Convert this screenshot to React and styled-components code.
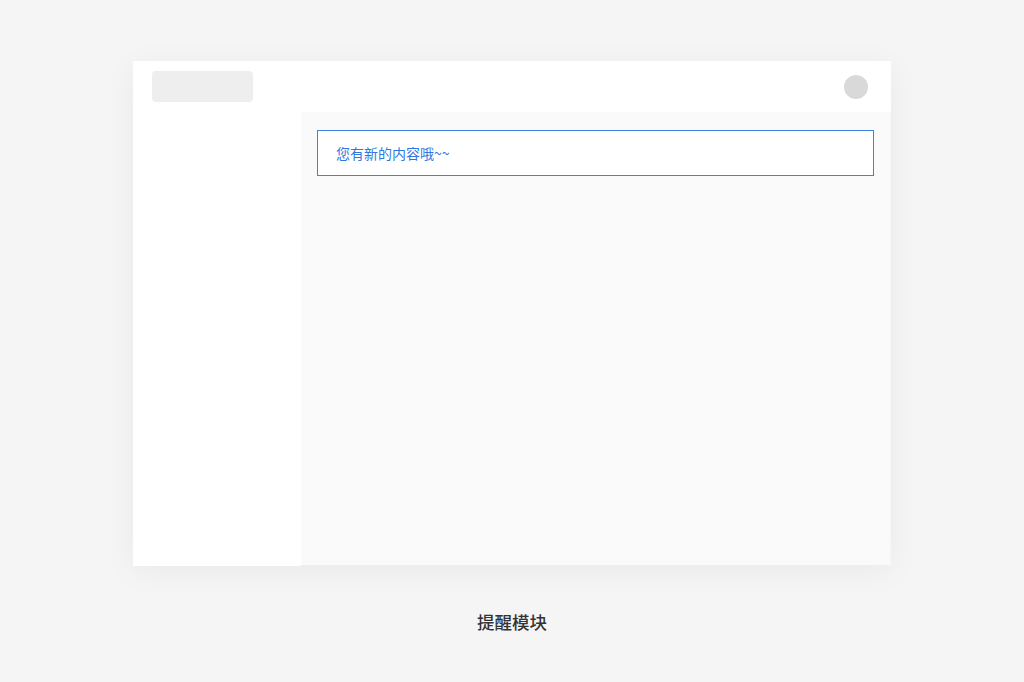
import React from "react";
import styled, { createGlobalStyle } from "styled-components";

const Global = createGlobalStyle`
  html, body { margin: 0; padding: 0; background: #f5f5f5; }
  body { font-family: "Noto Sans CJK SC", "Noto Sans", sans-serif; }
`;

const Page = styled.div`
  width: 1024px;
  height: 682px;
  background: #f5f5f5;
  display: flex;
  flex-direction: column;
  align-items: center;
  padding-top: 61px;
  box-sizing: border-box;
`;

const Frame = styled.div`
  width: 758px;
  height: 504px;
  display: flex;
  flex-direction: column;
  box-shadow: 0 6px 30px rgba(0, 0, 0, 0.05);
`;

const Header = styled.div`
  height: 51px;
  background: #ffffff;
  display: flex;
  align-items: center;
  justify-content: space-between;
  padding: 0 23px 0 19px;
  flex-shrink: 0;
`;

const Logo = styled.div`
  width: 101px;
  height: 31px;
  border-radius: 4px;
  background: #eeeeee;
`;

const Avatar = styled.div`
  width: 24px;
  height: 24px;
  border-radius: 50%;
  background: #d9d9d9;
`;

const Body = styled.div`
  flex: 1;
  display: flex;
`;

const Sidebar = styled.div`
  width: 168px;
  background: #ffffff;
  margin-bottom: -1px;
`;

const Main = styled.div`
  flex: 1;
  background: #fafafa;
  padding: 18px 16px 0 16px;
  margin-right: 1px;
`;

const Alert = styled.div`
  height: 44px;
  border: 1px solid #3f80e0;
  background: #ffffff;
  display: flex;
  align-items: center;
  padding-left: 18px;
  color: #2f78e0;
  font-size: 14px;
`;

const Caption = styled.div`
  margin-top: 45px;
  font-size: 17.5px;
  color: #333333;
  font-weight: 500;
  line-height: 24px;
`;

export default function App() {
  return (
    <>
      <Global />
      <Page>
        <Frame>
          <Header>
            <Logo />
            <Avatar />
          </Header>
          <Body>
            <Sidebar />
            <Main>
              <Alert>您有新的内容哦~~</Alert>
            </Main>
          </Body>
        </Frame>
        <Caption>提醒模块</Caption>
      </Page>
    </>
  );
}
